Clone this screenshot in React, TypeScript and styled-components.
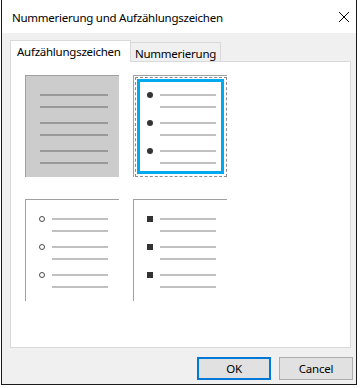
import styled, { createGlobalStyle, css } from "styled-components";

type MarkerKind = "none" | "dot" | "circle" | "square";

const GlobalStyle = createGlobalStyle`
    body {
        margin: 0;
        background: #fff;
        font-family: "Noto Sans", "Open Sans", sans-serif;
        font-size: 11.5px;
        letter-spacing: -0.25px;
        color: #000;
    }
`;

const pairs = [0, 1, 2];

const BulletList = ({ kind }: { kind: MarkerKind }) => (
    <List $kind={kind}>
        {pairs.map((i) => (
            <Pair key={i}>
                <Row>
                    {kind !== "none" && (
                        <MarkerSlot>
                            <Marker $kind={kind} />
                        </MarkerSlot>
                    )}
                    <Line $kind={kind} />
                </Row>
                <Row>
                    {kind !== "none" && <MarkerSlot />}
                    <Line $kind={kind} />
                </Row>
            </Pair>
        ))}
    </List>
);

const App = () => {
    return (
        <>
            <GlobalStyle />
            <Window>
                <TitleBar>
                    <Title>Nummerierung und Aufzählungszeichen</Title>
                    <CloseButton aria-label="Close">
                        <CloseIcon />
                    </CloseButton>
                </TitleBar>
                <Body>
                    <Tabs>
                        <Tab $active>Aufzählungszeichen</Tab>
                        <Tab>Nummerierung</Tab>
                    </Tabs>
                    <Panel>
                        <Gallery>
                            <Preview $none>
                                <BulletList kind="none" />
                            </Preview>
                            <Preview>
                                <Focus>
                                    <Selection>
                                        <BulletList kind="dot" />
                                    </Selection>
                                </Focus>
                            </Preview>
                            <Preview>
                                <BulletList kind="circle" />
                            </Preview>
                            <Preview>
                                <BulletList kind="square" />
                            </Preview>
                        </Gallery>
                    </Panel>
                    <Footer>
                        <Button $primary>OK</Button>
                        <Button>Cancel</Button>
                    </Footer>
                </Body>
            </Window>
        </>
    );
};

const Window = styled.div`
    margin-left: 1px;
    width: 356px;
    height: 385px;
    box-sizing: border-box;
    border: 1px solid #1a1a1a;
    border-top: none;
    display: flex;
    flex-direction: column;
`;

const TitleBar = styled.div`
    height: 33px;
    flex-shrink: 0;
    background: #fff;
    display: flex;
    align-items: center;
    padding-left: 10px;
`;

const Title = styled.div`
    flex: 1;
    padding-top: 1px;
`;

const CloseButton = styled.div`
    width: 24px;
    height: 33px;
    display: flex;
    align-items: center;
    justify-content: center;
`;

const Body = styled.div`
    flex: 1;
    background: #f0f0f0;
    padding: 7px 3px 0 8px;
    display: flex;
    flex-direction: column;
`;

const Tabs = styled.div`
    display: flex;
    align-items: flex-end;
    height: 22px;
    margin-bottom: -1px;
    position: relative;
    z-index: 1;
`;

const Tab = styled.div<{ $active?: boolean }>`
    box-sizing: border-box;
    display: flex;
    align-items: center;
    white-space: nowrap;
    border: 1px solid #d9d9d9;
    border-bottom: none;
    ${(p) =>
        p.$active
            ? css`
                  height: 22px;
                  width: 121px;
                  padding: 0 0 1px 6px;
                  background: #fff;
              `
            : css`
                  height: 19px;
                  width: 90px;
                  margin-bottom: 1px;
                  padding: 3px 0 0 4px;
                  border-left: none;
                  background: #f0f0f0;
              `}
`;

const Panel = styled.div`
    width: 341px;
    height: 287px;
    box-sizing: border-box;
    background: #fff;
    border: 1px solid #d9d9d9;
    padding: 13px 0 0 14px;
`;

const Gallery = styled.div`
    display: grid;
    grid-template-columns: repeat(2, 94px);
    grid-auto-rows: 102px;
    column-gap: 14px;
    row-gap: 22px;
`;

const Preview = styled.div<{ $none?: boolean }>`
    box-sizing: border-box;
    border-top: 1px solid #a0a0a0;
    border-left: 1px solid #a0a0a0;
    background: ${(p) => (p.$none ? "#cccccc" : "#fff")};
    display: flex;
`;

const Focus = styled.div`
    flex: 1;
    margin: 1px 0 0 1px;
    border: 1px dashed #8c8c8c;
    padding: 1px;
    display: flex;
`;

const Selection = styled.div`
    flex: 1;
    border: 3px solid #00a8ee;
    margin: 0 1px 1px 0;

    & > div {
        padding: 12px 0 0 7px;
    }
`;

const List = styled.div<{ $kind: MarkerKind }>`
    display: flex;
    flex-direction: column;
    gap: 14px;
    padding: 18px 0 0 ${(p) => (p.$kind === "none" ? 14 : 13)}px;
`;

const Pair = styled.div`
    display: flex;
    flex-direction: column;
    gap: 10px;
`;

const Row = styled.div`
    display: flex;
    align-items: center;
    height: 2px;
`;

const MarkerSlot = styled.div`
    width: 13px;
    flex-shrink: 0;
    display: flex;
    align-items: center;
`;

const Marker = styled.div<{ $kind: MarkerKind }>`
    width: 6px;
    height: 6px;
    box-sizing: border-box;
    flex-shrink: 0;
    ${(p) =>
        p.$kind === "dot" &&
        css`
            border-radius: 50%;
            background: #333;
        `}
    ${(p) =>
        p.$kind === "circle" &&
        css`
            border-radius: 50%;
            border: 1px solid #4a4a4a;
            background: #fff;
        `}
    ${(p) =>
        p.$kind === "square" &&
        css`
            background: #333;
        `}
`;

const Line = styled.div<{ $kind: MarkerKind }>`
    height: 2px;
    width: ${(p) => (p.$kind === "none" ? 68 : 56)}px;
    background: ${(p) => (p.$kind === "none" ? "#999999" : "#c0c0c0")};
`;

const Footer = styled.div`
    display: flex;
    justify-content: flex-end;
    gap: 8px;
    margin-top: 9px;
`;

const Button = styled.div<{ $primary?: boolean }>`
    width: 74px;
    height: 23px;
    box-sizing: border-box;
    display: flex;
    align-items: center;
    justify-content: center;
    background: #e1e1e1;
    border: ${(p) => (p.$primary ? "2px solid #0078d7" : "1px solid #adadad")};
`;

export default App;

const CloseIcon = () => {
    return (
        <svg width="10" height="10" viewBox="0 0 10 10" fill="none">
            <path d="M0 0L10 10M10 0L0 10" stroke="#000" strokeWidth="1" />
        </svg>
    );
};
